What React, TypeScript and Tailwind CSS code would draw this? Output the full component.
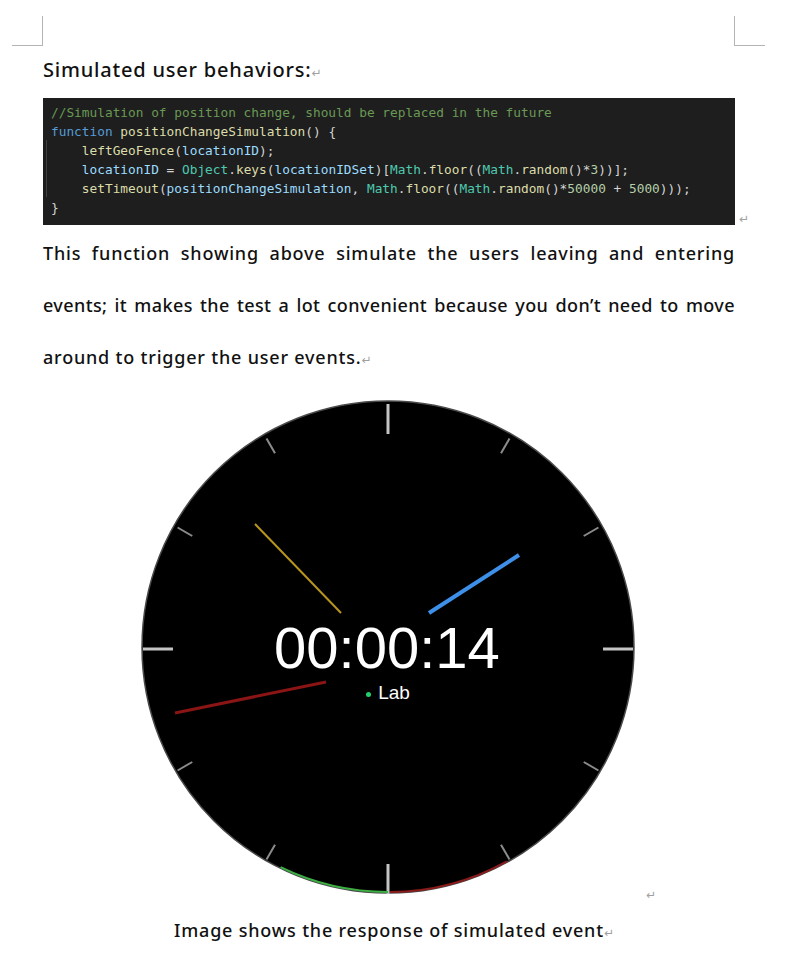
import React from 'react';

const docFont = { fontFamily: '"Noto Sans", "Noto Sans CJK KR", sans-serif' };

const Mark = ({ className = '' }: { className?: string }) => (
  <span className={`text-[#a0a0a0] font-['DejaVu_Sans',sans-serif] text-[12px] font-normal tracking-normal ${className}`}>↵</span>
);

const C = ({ c, children }: { c: string; children: React.ReactNode }) => <span className={c}>{children}</span>;

const CodeBlock = () => (
  <div className="relative bg-[#1e1e1e] h-[127px] pt-[5px] pl-[8px] font-['DejaVu_Sans_Mono',monospace] text-[12.8px] leading-[19px] text-[#d4d4d4] whitespace-pre">
    <div className="absolute left-[3px] top-[42px] w-px h-[57px] bg-[#404040]" />
    <div className="text-[#6a9955]">//Simulation of position change, should be replaced in the future</div>
    <div>
      <C c="text-[#569cd6]">function</C> <C c="text-[#dcdcaa]">positionChangeSimulation</C>() {'{'}
    </div>
    <div>
      {'    '}<C c="text-[#dcdcaa]">leftGeoFence</C>(<C c="text-[#9cdcfe]">locationID</C>);
    </div>
    <div>
      {'    '}<C c="text-[#9cdcfe]">locationID</C> = <C c="text-[#4ec9b0]">Object</C>.<C c="text-[#dcdcaa]">keys</C>(
      <C c="text-[#9cdcfe]">locationIDSet</C>)[<C c="text-[#4ec9b0]">Math</C>.<C c="text-[#dcdcaa]">floor</C>((
      <C c="text-[#4ec9b0]">Math</C>.<C c="text-[#dcdcaa]">random</C>()*<C c="text-[#b5cea8]">3</C>))];
    </div>
    <div>
      {'    '}<C c="text-[#dcdcaa]">setTimeout</C>(<C c="text-[#9cdcfe]">positionChangeSimulation</C>, <C c="text-[#4ec9b0]">Math</C>.
      <C c="text-[#dcdcaa]">floor</C>((<C c="text-[#4ec9b0]">Math</C>.<C c="text-[#dcdcaa]">random</C>()*
      <C c="text-[#b5cea8]">50000</C> + <C c="text-[#b5cea8]">5000</C>)));
    </div>
    <div>{'}'}</div>
    <Mark className="absolute right-[-14px] bottom-[-4px]" />
  </div>
);

const WatchFace = () => {
  const cx = 248;
  const cy = 249;
  const ticks = Array.from({ length: 12 }, (_, i) => {
    const a = ((i * 30 - 90) * Math.PI) / 180;
    const major = i % 3 === 0;
    const r1 = major ? 215 : 226;
    const r2 = major ? 245 : 243;
    return (
      <line
        key={i}
        x1={cx + r1 * Math.cos(a)}
        y1={cy + r1 * Math.sin(a)}
        x2={cx + r2 * Math.cos(a)}
        y2={cy + r2 * Math.sin(a)}
        stroke={major ? '#c4c4c4' : '#8c8c8c'}
        strokeWidth={major ? 3 : 2}
      />
    );
  });
  return (
    <div className="relative w-[496px] h-[496px]">
      <svg width="496" height="496" viewBox="0 0 496 496" className="block">
        <circle cx="248" cy="247" r="246" fill="#000" stroke="#4a4a4a" strokeWidth="1.5" />
        {ticks}
        <line x1="115" y1="124" x2="201" y2="213" stroke="#b8961e" strokeWidth="2" />
        <line x1="289" y1="213" x2="379" y2="155" stroke="#3d8fe8" strokeWidth="4" />
        <line x1="35" y1="313" x2="186" y2="282" stroke="#8b1414" strokeWidth="3" />
        <path d="M 248 492 A 245 245 0 0 1 140.6 467.2" fill="none" stroke="#3cb043" strokeWidth="2" />
        <path d="M 366.8 461.3 A 245 245 0 0 1 250 492" fill="none" stroke="#8b1a1a" strokeWidth="2" />
      </svg>
      <div className="absolute left-0 right-0 top-[219px] flex justify-center">
        <span className="font-['Liberation_Sans',Arial,sans-serif] text-[58px] leading-none text-white pr-[2px]">
          00:00:14
        </span>
      </div>
      <div className="absolute left-0 right-0 top-[283px] flex justify-center items-center gap-[4px]">
        <span className="w-[5px] h-[5px] rounded-full bg-[#22d06a] mt-[3px]" />
        <span className="font-['Liberation_Sans',Arial,sans-serif] text-[19px] leading-none text-white pl-[3px]">
          Lab
        </span>
      </div>
    </div>
  );
};

export default function App() {
  return (
    <div className="w-[787px] h-[963px] bg-white overflow-hidden text-[#111]" style={docFont}>
      <div className="flex h-[46px]">
        <div className="ml-[12px] mt-[16px] w-[31px] h-[30px] border-r border-b border-[#b4b4b4]" />
        <div className="ml-auto mr-[22px] mt-[16px] w-[31px] h-[30px] border-l border-b border-[#b4b4b4]" />
      </div>
      <div className="ml-[43px] w-[692px]">
        <div className="mt-[10px] h-[28px] text-[20px] leading-[28px] font-medium tracking-[0.8px]">
          Simulated user behaviors:<Mark />
        </div>
        <div className="mt-[14px]">
          <CodeBlock />
        </div>
        <div className="mt-[2px] text-[18px] leading-[52px] font-medium tracking-[0.8px]">
          <div className="whitespace-nowrap text-justify [text-align-last:justify]">
            This function showing above simulate the users leaving and entering
          </div>
          <div className="whitespace-nowrap text-justify [text-align-last:justify] tracking-[0.4px]">
            events; it makes the test a lot convenient because you don’t need to move
          </div>
          <div className="whitespace-nowrap">
            around to trigger the user events.<Mark />
          </div>
        </div>
        <div className="relative mt-[14px] flex justify-center">
          <div className="ml-[-2px]">
            <WatchFace />
          </div>
          <Mark className="absolute left-[603px] bottom-[-8px]" />
        </div>
        <div className="mt-[20px] h-[28px] text-[18px] leading-[28px] font-medium tracking-[0.8px] text-center pl-[10px]">
          Image shows the response of simulated event<Mark />
        </div>
      </div>
    </div>
  );
}
